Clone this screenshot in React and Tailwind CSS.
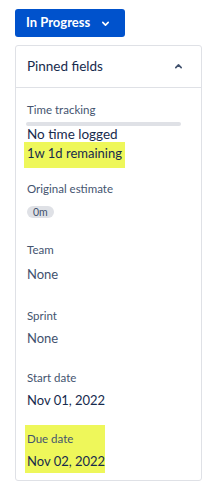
import React from 'react'

const font = { fontFamily: 'Lato, "Noto Sans", sans-serif' }

function Chevron({ up, className }) {
  return (
    <svg viewBox="0 0 24 24" className={className} fill="none" stroke="currentColor" strokeWidth="3" strokeLinecap="round" strokeLinejoin="round">
      {up ? <path d="M7 14l5-5 5 5" /> : <path d="M7 10l5 5 5-5" />}
    </svg>
  )
}

function Label({ children }) {
  return <div className="whitespace-nowrap text-[11.5px] leading-[16px] text-[#44546f]">{children}</div>
}

function Value({ children, className = '' }) {
  return <div className={`whitespace-nowrap text-[13px] leading-[20px] text-[#172b4d] ${className}`}>{children}</div>
}

function App() {
  return (
    <div className="w-[211px] h-[485px] bg-white pl-[15px] pt-[9px]" style={font}>
      <button className="flex items-center h-[28px] w-[110px] bg-[#0052cc] rounded-[3px] pl-[11px] text-white text-[13px] font-bold whitespace-nowrap">
        In Progress
        <Chevron className="w-[13px] h-[13px] ml-[9px]" />
      </button>

      <div className="mt-[8px] w-[187px] h-[436px] border border-[#dfe1e6] rounded-[3px]">
        <div className="flex items-center justify-between h-[42px] border-b border-[#dfe1e6] pl-[11px] pr-[16px]">
          <span className="text-[13.5px] text-[#172b4d] whitespace-nowrap">Pinned fields</span>
          <Chevron up className="w-[13px] h-[13px] text-[#42526e]" />
        </div>

        <div className="px-[11px] pt-[14px]">
          <Label>Time tracking</Label>
          <div className="mt-[4px] h-[4px] w-[155px] -ml-[1px] rounded-full bg-[#dfe1e6]" />
          <div className="whitespace-nowrap text-[13.5px] leading-[16px] text-[#172b4d]">No time logged</div>
          <div className="whitespace-nowrap -ml-[3px] pl-[3px] w-[101px] h-[26px] bg-[#eef75a] text-[13px] leading-[22px] text-[#172b4d]">
            1w 1d remaining
          </div>

          <div className="mt-[13px]">
            <Label>Original estimate</Label>
          </div>
          <div className="mt-[9px] flex">
            <div className="flex items-center h-[12px] px-[6px] rounded-full bg-[#dfe1e6] text-[10.5px] leading-[12px] text-[#42526e]">0m</div>
          </div>

          <div className="mt-[24px]">
            <Label>Team</Label>
            <Value className="mt-[6px] text-[#42526e]">None</Value>
          </div>

          <div className="mt-[24px]">
            <Label>Sprint</Label>
            <Value className="mt-[4px] text-[#42526e]">None</Value>
          </div>

          <div className="mt-[22px]">
            <Label>Start date</Label>
            <Value className="mt-[4px]">Nov 01, 2022</Value>
          </div>

          <div className="mt-[15px] -ml-[2px] pl-[2px] w-[80px] pt-[6px] pb-[2px] bg-[#eef75a]">
            <Label>Due date</Label>
            <Value className="mt-[4px]">Nov 02, 2022</Value>
          </div>
        </div>
      </div>
    </div>
  )
}

export default App
